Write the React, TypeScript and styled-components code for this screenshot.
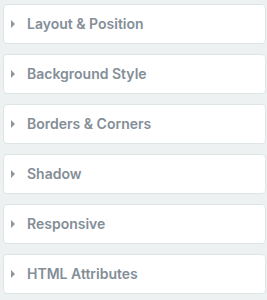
import React from 'react';
import styled, { createGlobalStyle } from 'styled-components';

const GlobalStyle = createGlobalStyle`
  html, body {
    margin: 0;
    padding: 0;
    background: #eef1f2;
  }
`;

const sections = [
  'Layout & Position',
  'Background Style',
  'Borders & Corners',
  'Shadow',
  'Responsive',
  'HTML Attributes',
];

const App: React.FC = () => {
  return (
    <>
      <GlobalStyle />
      <Panel>
        {sections.map((title) => (
          <Section key={title}>
            <Caret />
            <Title>{title}</Title>
          </Section>
        ))}
      </Panel>
    </>
  );
};

const Panel = styled.div`
  display: flex;
  flex-direction: column;
  gap: 10px;
  padding: 4px 1px 6px 3px;
  width: 267px;
  height: 300px;
  box-sizing: border-box;
  background: #eef1f2;
`;

const Section = styled.div`
  display: flex;
  align-items: center;
  box-sizing: border-box;
  height: 40px;
  padding: 0 0 1px 7px;
  background: #ffffff;
  border: 1px solid #dde5e5;
  border-radius: 4px;
  cursor: pointer;
`;

const Caret = styled.span`
  width: 0;
  height: 0;
  border-top: 4px solid transparent;
  border-bottom: 4px solid transparent;
  border-left: 4px solid #8f979e;
  margin-right: 12px;
`;

const Title = styled.span`
  font-family: Inter, 'Noto Sans', sans-serif;
  font-size: 14px;
  font-weight: 600;
  color: #848e97;
  letter-spacing: 0;
`;

export default App;
